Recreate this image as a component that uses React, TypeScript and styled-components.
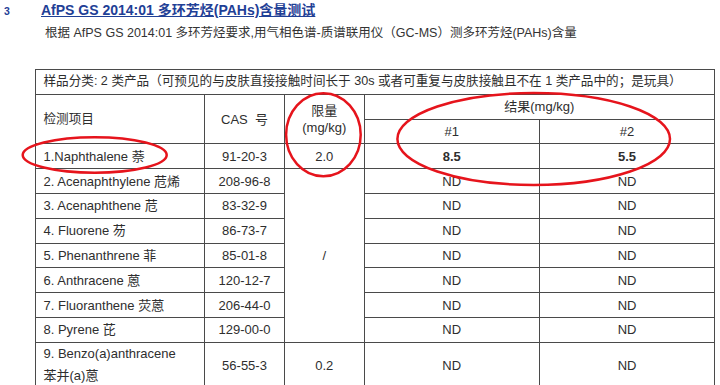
import React from "react";
import styled, { createGlobalStyle } from "styled-components";

const GlobalStyle = createGlobalStyle`
  body {
    margin: 0;
    background: #ffffff;
    font-family: "Liberation Sans", Arial, "Noto Sans CJK SC", sans-serif;
    color: #2e2e2e;
  }
`;

const Page = styled.div`
  width: 720px;
  height: 385px;
  overflow: hidden;
`;

const Heading = styled.div`
  display: flex;
  align-items: baseline;
  height: 20px;
  line-height: 20px;
  color: #1f4096;
  font-weight: 700;
`;

const SectionNo = styled.span`
  width: 41px;
  padding-left: 4px;
  box-sizing: border-box;
  font-size: 10.5px;
`;

const Title = styled.span`
  font-size: 14px;
  text-decoration: underline;
  text-underline-offset: 1px;
`;

const Intro = styled.p`
  margin: 4px 0 0 45px;
  font-size: 12.5px;
  line-height: 19px;
  color: #333;
`;

const TableWrap = styled.div`
  position: relative;
  width: 679px;
  margin: 26px 0 0 35px;
`;

const Table = styled.table`
  width: 679px;
  border-collapse: collapse;
  table-layout: fixed;
  font-size: 13px;
  color: #2e2e2e;
`;

const Row = styled.tr<{ $tall?: boolean }>`
  height: ${(p) => (p.$tall ? "46px" : "24.8px")};
`;

const Cell = styled.td<{ $left?: boolean; $bold?: boolean; $small?: boolean }>`
  border: 1px solid #4a4a4a;
  padding: ${(p) => (p.$left ? "0 0 0 7.5px" : "0")};
  text-align: ${(p) => (p.$left ? "left" : "center")};
  font-weight: ${(p) => (p.$bold ? 700 : 400)};
  font-size: ${(p) => (p.$small ? "12.6px" : "13px")};
  vertical-align: middle;
  line-height: 17px;
  white-space: nowrap;
`;

const TwoLine = styled.div`
  line-height: 22px;
`;

const Marks = styled.svg`
  position: absolute;
  left: 0;
  top: 0;
  width: 100%;
  height: 100%;
  overflow: visible;
  pointer-events: none;
`;

const items: [string, string][] = [
  ["2. Acenaphthylene 苊烯", "208-96-8"],
  ["3. Acenaphthene 苊", "83-32-9"],
  ["4. Fluorene 芴", "86-73-7"],
  ["5. Phenanthrene 菲", "85-01-8"],
  ["6. Anthracene 蒽", "120-12-7"],
  ["7. Fluoranthene 荧蒽", "206-44-0"],
  ["8. Pyrene 芘", "129-00-0"],
];

export default function App() {
  return (
    <Page>
      <GlobalStyle />
      <Heading>
        <SectionNo>3</SectionNo>
        <Title>AfPS GS 2014:01 多环芳烃(PAHs)含量测试</Title>
      </Heading>
      <Intro>
        根据 AfPS GS 2014:01 多环芳烃要求,用气相色谱-质谱联用仪（GC-MS）测多环芳烃(PAHs)含量
      </Intro>
      <TableWrap>
        <Table>
          <colgroup>
            <col style={{ width: 169 }} />
            <col style={{ width: 80 }} />
            <col style={{ width: 79.5 }} />
            <col style={{ width: 175.5 }} />
            <col style={{ width: 175 }} />
          </colgroup>
          <tbody>
            <Row>
              <Cell $left $small colSpan={5}>
                样品分类: 2 类产品（可预见的与皮肤直接接触时间长于 30s 或者可重复与皮肤接触且不在 1 类产品中的；是玩具）
              </Cell>
            </Row>
            <Row>
              <Cell $left $small rowSpan={2}>检测项目</Cell>
              <Cell rowSpan={2}>CAS&nbsp; 号</Cell>
              <Cell rowSpan={2}>
                限量
                <br />
                (mg/kg)
              </Cell>
              <Cell colSpan={2}>结果(mg/kg)</Cell>
            </Row>
            <Row>
              <Cell>#1</Cell>
              <Cell>#2</Cell>
            </Row>
            <Row>
              <Cell $left>1.Naphthalene 萘</Cell>
              <Cell>91-20-3</Cell>
              <Cell>2.0</Cell>
              <Cell $bold>8.5</Cell>
              <Cell $bold>5.5</Cell>
            </Row>
            {items.map(([name, cas], i) => (
              <Row key={cas}>
                <Cell $left>{name}</Cell>
                <Cell>{cas}</Cell>
                {i === 0 && <Cell rowSpan={items.length}>/</Cell>}
                <Cell>ND</Cell>
                <Cell>ND</Cell>
              </Row>
            ))}
            <Row $tall>
              <Cell $left>
                <TwoLine>
                  9. Benzo(a)anthracene
                  <br />
                  苯并(a)蒽
                </TwoLine>
              </Cell>
              <Cell>56-55-3</Cell>
              <Cell>0.2</Cell>
              <Cell>ND</Cell>
              <Cell>ND</Cell>
            </Row>
          </tbody>
        </Table>
        <Marks>
          <g fill="none" stroke="#e6141c" strokeWidth="2.5">
            <ellipse cx="59.7" cy="86" rx="72" ry="17.7" />
            <ellipse cx="288.4" cy="65.7" rx="37.3" ry="41.5" />
            <ellipse cx="498.7" cy="70" rx="136.3" ry="46" />
          </g>
        </Marks>
      </TableWrap>
    </Page>
  );
}
